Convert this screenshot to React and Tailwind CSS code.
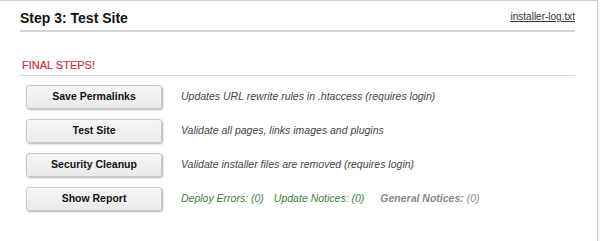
import React from 'react';

const steps = [
    { label: 'Save Permalinks', desc: 'Updates URL rewrite rules in .htaccess (requires login)' },
    { label: 'Test Site', desc: 'Validate all pages, links images and plugins' },
    { label: 'Security Cleanup', desc: 'Validate installer files are removed (requires login)' },
];

function StepButton({ children }) {
    return (
        <button className="w-[136px] h-[24px] shrink-0 rounded-[3px] border border-[#c8c8c8] bg-gradient-to-b from-[#f6f6f6] to-[#ebebeb] text-[10.5px] font-bold text-[#111] shadow-[1px_1px_2px_rgba(0,0,0,0.3)]">
            {children}
        </button>
    );
}

export default function App() {
    return (
        <div className="w-[600px] h-[241px] overflow-hidden bg-white font-['Liberation_Sans',Arial,sans-serif]">
            <div className="w-[598px] h-[241px] border-t border-r border-[#cfcfcf] pl-[20px] pr-[22px] shadow-[1px_1px_2px_rgba(0,0,0,0.08)]">
                <div className="flex justify-between items-start pt-[9px] pb-[4px] border-b-2 border-[#d3d3d3]">
                    <h1 className="text-[14px] leading-[16px] font-bold text-[#111]">Step 3: Test Site</h1>
                    <a href="#" className="mt-[1px] text-[10px] leading-[12px] text-[#333] underline">installer-log.txt</a>
                </div>

                <div className="mt-[27px] pb-[3px] pl-[2px] border-b border-[#d8d8d8] text-[11px] leading-[13px] text-[#cc3337] [-webkit-text-stroke:0.2px_#cc3337]">
                    FINAL STEPS!
                </div>

                <div className="flex flex-col gap-[10px] mt-[9px] pl-[6px]">
                    {steps.map((s) => (
                        <div key={s.label} className="flex items-center">
                            <StepButton>{s.label}</StepButton>
                            <span className="ml-[19px] text-[10.5px] italic text-[#444]">{s.desc}</span>
                        </div>
                    ))}
                    <div className="flex items-center">
                        <StepButton>Show Report</StepButton>
                        <div className="ml-[19px] flex text-[10.5px] italic">
                            <span className="text-[#3d7e3d]">Deploy Errors: (0)</span>
                            <span className="ml-[10px] text-[#3d7e3d]">Update Notices: (0)</span>
                            <span className="ml-[16px] text-[#888]"><b>General Notices:</b> (0)</span>
                        </div>
                    </div>
                </div>
            </div>
        </div>
    );
}
